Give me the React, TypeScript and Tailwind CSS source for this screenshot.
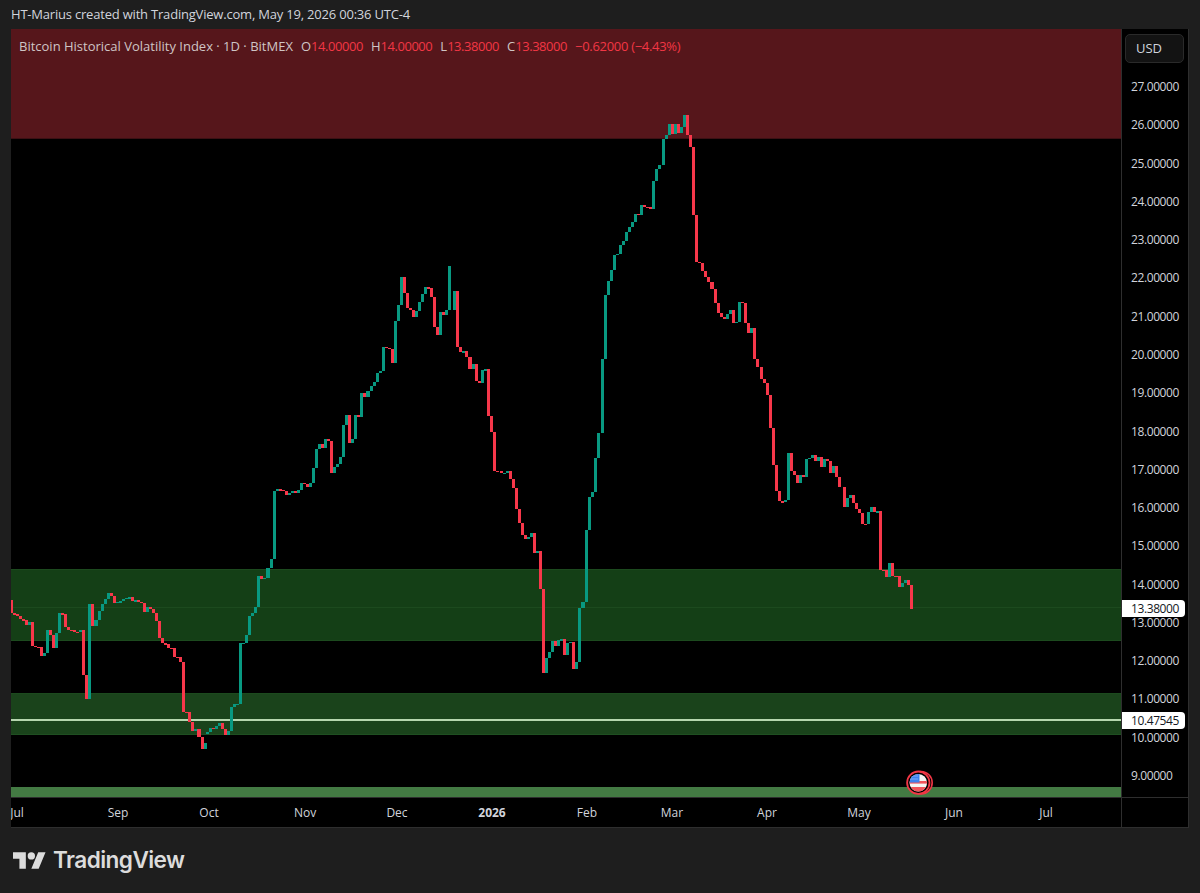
const UP = "#089981";
const DOWN = "#f7374a";
const STEP = 3.03;

type Candle = { x: number; w: number; y: number; h: number; fill: string };

// traced runs of closes: [start x, y base, values at 3x]
const runs: [number, number, number[]][] = [
	[9.8, 560, [120, 160]],
	[12.67, 560, [160, 162, 168, 178, 179, 196, 186, 258, 260, 261, 288, 278, 210, 224, 264, 220, 160, 163, 202, 210, 211, 216, 217, 210, 344, 418, 132, 198, 180, 152, 132, 116, 100, 108, 130, 126, 124, 118, 114, 112, 122, 121, 126, 130, 156, 142, 146, 160, 184, 234, 250, 251, 264, 265, 290, 291, 306, 456, 457, 486, 512, 508, 532, 566, 550]],
	[205.67, 560, [518, 517, 504, 508, 498, 490, 506, 526, 514, 440, 432, 431, 250, 248, 226, 168]],
	[251.33, 250, [1098, 1088, 1072, 978, 988, 984, 954, 928, 724, 718, 719, 722, 736, 730, 724, 730, 720, 698, 702, 712, 698, 654, 596, 582, 594, 568, 574, 670, 652, 642, 622, 524, 496, 580, 566, 496, 500, 430, 442, 424, 408, 396, 368, 364, 290, 294, 296, 340, 212, 164, 82, 130, 174, 180, 202, 182, 156, 132, 112, 114, 140, 230, 254, 186, 194, 180, 48]],
	[453.33, 250, [180, 124, 290, 306, 304, 322, 356, 342, 394, 400, 360, 358, 498, 546, 662, 664]],
	[499.67, 420, [152, 160, 158, 152, 176, 204, 268, 308, 346, 358, 350, 340, 398, 394, 508, 760, 714, 696, 664, 678, 660, 658, 706, 670, 666, 746, 726, 564, 546, 330, 232, 216, 114, 40]],
	[600.67, 100, [1000, 778, 586, 542, 510, 466, 462, 436, 424, 396, 382, 366, 342, 344, 314, 320, 322, 328, 244, 208, 196]],
	[662, 100, [196, 118, 106, 72, 102, 72, 100, 80, 44, 106, 142, 344, 486, 488, 514, 532, 546, 568, 610, 640, 650, 658, 642, 630, 670, 666, 606, 608, 668, 698, 684, 776, 800]],
	[759.67, 290, [230, 268, 280, 316, 414, 524, 602, 634, 635, 630, 490, 542, 556, 580, 556, 562, 508, 504, 496, 512, 500, 530, 508, 514, 548, 528, 560, 590]],
	[842.67, 290, [590, 650, 624, 616, 638, 656, 670, 702, 703, 666, 650, 666, 664]],
	[879.33, 290, [664, 840, 841, 860, 820, 858, 859, 890, 880, 870, 884, 956]],
];

const candles: Candle[] = runs.flatMap(([start, base, vals]) =>
	vals.slice(1).map((v, i) => {
		const open = base + vals[i] / 3;
		const close = base + v / 3;
		const left = Math.round(start + i * STEP);
		const right = Math.round(start + (i + 1) * STEP);
		return {
			x: left,
			w: right - left,
			y: Math.min(open, close),
			h: Math.max(Math.abs(close - open), 1.4),
			fill: close < open ? UP : DOWN,
		};
	}),
);

const prices = ["27.00000", "26.00000", "25.00000", "24.00000", "23.00000", "22.00000", "21.00000", "20.00000", "19.00000", "18.00000", "17.00000", "16.00000", "15.00000", "14.00000", "13.00000", "12.00000", "11.00000", "10.00000", "9.00000"];

function Chart() {
	return (
		<svg viewBox="11 29 1110 768" className="block w-[1110px] h-[768px]" shapeRendering="crispEdges">
			<rect x="11" y="29" width="1110" height="109" fill="#56161b" />
			<rect x="11" y="138" width="1110" height="1" fill="#3c1014" />
			<rect x="11" y="569" width="1110" height="71" fill="#143f16" />
			<rect x="11" y="569" width="1110" height="1" fill="#1c4a1e" />
			<rect x="11" y="607" width="1110" height="1" fill="#1c4a1e" />
			<rect x="11" y="640" width="1110" height="1" fill="#1c4a1e" />
			<rect x="11" y="693" width="1110" height="42" fill="#1a431b" />
			<rect x="11" y="693" width="1110" height="1" fill="#1c4a1e" />
			<rect x="11" y="734" width="1110" height="1" fill="#1f4f21" />
			<rect x="11" y="719" width="1110" height="2" fill="#b5d6ae" />
			<rect x="11" y="787" width="1110" height="10" fill="#437a43" />
			{candles.map((c, i) => (
				<rect key={i} x={c.x} y={c.y} width={c.w} height={c.h} fill={c.fill} />
			))}
			<g shapeRendering="auto">
				<circle cx="921" cy="782.7" r="11.2" fill="#000" stroke="#f23645" strokeWidth="1.6" />
				<circle cx="918.3" cy="782.7" r="11.2" fill="#000" stroke="#f23645" strokeWidth="1.8" />
				<clipPath id="flag">
					<circle cx="918.3" cy="782.7" r="8.8" />
				</clipPath>
				<g clipPath="url(#flag)">
					<rect x="909" y="773" width="19" height="19" fill="#f5f5f5" />
					<rect x="909" y="781" width="19" height="2.6" fill="#f0545c" />
					<rect x="909" y="787" width="19" height="5" fill="#f0545c" />
					<rect x="909" y="773" width="10.5" height="9.5" fill="#3b82f0" />
					<path d="M910.5 776h8M910.5 779h8" stroke="#dbe8ff" strokeWidth="0.8" strokeDasharray="1 1" />
				</g>
			</g>
		</svg>
	);
}

function TimeAxis() {
	return (
		<div className="flex h-[29px] w-[1110px] items-center overflow-hidden text-xs text-[#d1d4dc]">
			<span className="ml-[6px] flex w-0 justify-center">Jul</span>
			<span className="ml-[101px] flex w-0 justify-center">Sep</span>
			<span className="ml-[91px] flex w-0 justify-center">Oct</span>
			<span className="ml-[96px] flex w-0 justify-center">Nov</span>
			<span className="ml-[92px] flex w-0 justify-center">Dec</span>
			<span className="ml-[95px] flex w-0 justify-center font-bold">2026</span>
			<span className="ml-[95px] flex w-0 justify-center">Feb</span>
			<span className="ml-[85px] flex w-0 justify-center">Mar</span>
			<span className="ml-[95px] flex w-0 justify-center">Apr</span>
			<span className="ml-[92px] flex w-0 justify-center">May</span>
			<span className="ml-[95px] flex w-0 justify-center">Jun</span>
			<span className="ml-[92px] flex w-0 justify-center">Jul</span>
		</div>
	);
}

function PriceAxis() {
	return (
		<div className="relative h-[768px] w-[66px] border-l border-[#2e2e2e] text-xs tracking-[-0.4px] text-[#d1d4dc]">
			<div className="ml-[3px] mt-[5px] flex h-[29px] w-[59px] items-center rounded-[5px] border border-[#2a2a2a] bg-[#131313] pl-[10px] text-[13px] tracking-normal text-[#d1d4dc]">
				USD
			</div>
			<div className="mt-[5px] flex flex-col pl-[9px]">
				{prices.map((p) => (
					<div key={p} className="flex h-[38.28px] items-center">
						{p}
					</div>
				))}
			</div>
			<div className="absolute left-0 top-[571px] flex h-[17px] w-[63px] items-center rounded-r-sm bg-white pl-[9px] text-[#131722]">
				13.38000
			</div>
			<div className="absolute left-0 top-[683px] flex h-[17px] w-[63px] items-center rounded-r-sm bg-white pl-[9px] text-[#131722]">
				10.47545
			</div>
		</div>
	);
}

export default function App() {
	return (
		<div className="h-[893px] w-[1200px] overflow-hidden bg-[#1e1e1e] font-['Open_Sans',sans-serif]">
			<div className="flex h-[29px] items-center pl-[11px] text-[13px] tracking-[-0.2px] text-[#d1d4dc]">
				HT-Marius created with TradingView.com, May 19, 2026 00:36 UTC-4
			</div>
			<div className="ml-[11px] w-[1178px] border-r border-b border-[#2e2e2e] bg-black">
				<div className="flex">
					<div className="relative w-[1110px]">
						<Chart />
						<div className="absolute left-[8px] top-[8px] flex gap-[8px] whitespace-nowrap text-[13px] text-[#cfc5c5]">
							<span>Bitcoin Historical Volatility Index · 1D · BitMEX</span>
							<span>
								O<span className="tracking-[-0.45px] text-[#f23645]">14.00000</span>
							</span>
							<span>
								H<span className="tracking-[-0.45px] text-[#f23645]">14.00000</span>
							</span>
							<span>
								L<span className="tracking-[-0.45px] text-[#f23645]">13.38000</span>
							</span>
							<span>
								C<span className="tracking-[-0.45px] text-[#f23645]">13.38000</span>
							</span>
							<span className="tracking-[-0.3px] text-[#f23645]">−0.62000 (−4.43%)</span>
						</div>
					</div>
					<PriceAxis />
				</div>
				<div className="flex border-t border-[#2e2e2e]">
					<TimeAxis />
					<div className="w-[66px] border-l border-[#2e2e2e]" />
				</div>
			</div>
			<div className="flex items-center gap-[7px] pl-[13px] pt-[21px]">
				<svg viewBox="0 0 36 18" className="w-[33px] h-[17px]" fill="#dcdcdc">
					<path d="M14 18H7V7H0V0h14v18zM28 18h-8l7.5-18h8L28 18z" />
					<circle cx="20" cy="4" r="4" />
				</svg>
				<span className="text-[22.6px] font-semibold leading-none tracking-tight text-[#dcdcdc] font-['Inter',sans-serif]">
					TradingView
				</span>
			</div>
		</div>
	);
}
